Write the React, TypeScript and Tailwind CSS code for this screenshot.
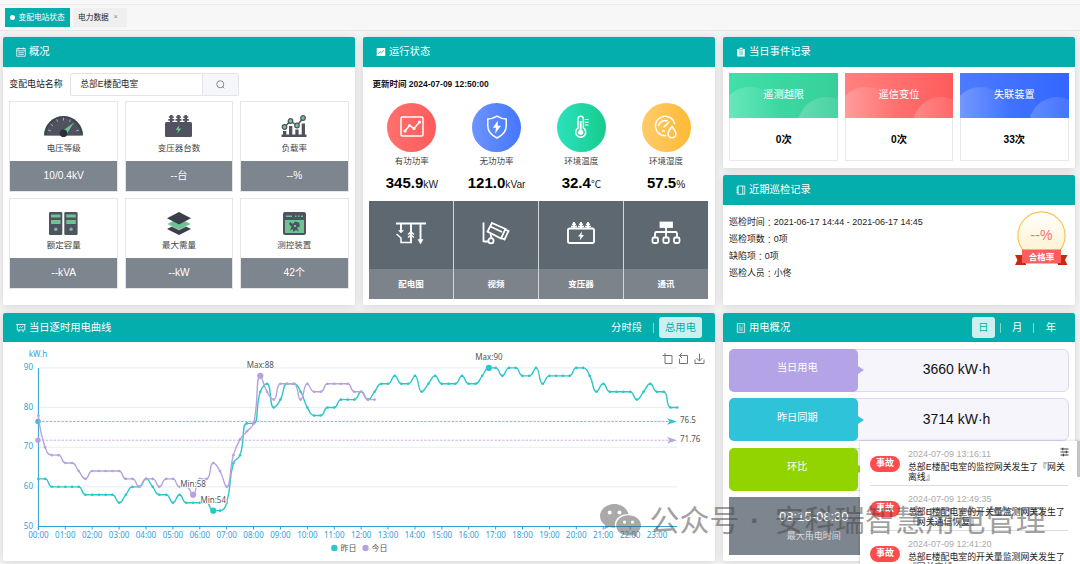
import React from 'react';
import type { ReactNode } from 'react';

const TEAL = '#2ec7c9';
const PURPLE = '#b6a2de';

const yesterday = [
  62, 62, 60, 60, 60, 60, 60, 58, 58, 58, 58, 58, 56, 58, 60, 60, 62, 60, 58, 58, 56, 58, 56, 56,
  56, 56, 54, 54, 56, 66, 68, 76, 76, 84, 86, 80, 82, 86, 86, 84, 80, 78, 78, 80, 80, 82, 82, 82,
  84, 82, 84, 86, 86, 88, 86, 86, 88, 84, 86, 88, 86, 86, 86, 88, 86, 86, 88, 90, 90, 88, 90, 90,
  88, 88, 90, 86, 88, 88, 88, 88, 90, 90, 88, 84, 86, 84, 84, 84, 84, 82, 84, 86, 84, 84, 80, 80,
];
const today = [
  78, 70, 68, 68, 66, 66, 64, 62, 64, 64, 64, 64, 64, 62, 62, 60, 62, 62, 60, 62, 62, 60, 60, 58,
  62, 62, 66, 64, 60, 68, 72, 74, 76, 88, 84, 82, 86, 86, 86, 82, 86, 84, 84, 86, 86, 86, 86, 84,
  84, 82, 82,
];

const px = (i: number) => 35.4 + i * 6.724;
const py = (v: number) => 183.5 - (v - 50) * 3.965;
const clamp = (v: number, a: number, b: number) => Math.min(Math.max(v, Math.min(a, b)), Math.max(a, b));

function smoothPath(data: number[]): string {
  const pts = data.map((v, i) => [px(i), py(v)]);
  let d = `M${pts[0][0]} ${pts[0][1]}`;
  let out = pts[0];
  for (let i = 1; i < pts.length; i++) {
    const p = pts[i];
    const prev = pts[i - 1];
    const next = pts[i + 1];
    let cin = p;
    let nextOut = p;
    if (next) {
      const lp = Math.hypot(p[0] - prev[0], p[1] - prev[1]);
      const ln = Math.hypot(next[0] - p[0], next[1] - p[1]);
      const k = (0.5 * ln) / (ln + lp);
      const ox = clamp(p[0] + (next[0] - prev[0]) * k, p[0], next[0]);
      const oy = clamp(p[1] + (next[1] - prev[1]) * k, p[1], next[1]);
      const ix = clamp(p[0] - ((ox - p[0]) * lp) / ln, prev[0], p[0]);
      const iy = clamp(p[1] - ((oy - p[1]) * lp) / ln, prev[1], p[1]);
      cin = [ix, iy];
      nextOut = [p[0] + ((p[0] - ix) * ln) / lp, p[1] + ((p[1] - iy) * ln) / lp];
    }
    d += `C${out[0]} ${out[1]} ${cin[0]} ${cin[1]} ${p[0]} ${p[1]}`;
    out = nextOut;
  }
  return d;
}

function Panel({ icon, title, extra, className, children }: { icon: ReactNode; title: string; extra?: ReactNode; className: string; children: ReactNode }) {
  return (
    <section className={`flex flex-col overflow-hidden rounded-[2px] bg-white shadow-[0_1px_8px_rgba(0,0,0,0.13)] ${className}`}>
      <header className="flex h-[29.5px] shrink-0 items-center bg-[#04aeac] pl-[13px] text-white">
        <span className="flex w-[13px] items-center">{icon}</span>
        <h2 className="text-[10.3px] leading-[14px] whitespace-nowrap">{title}</h2>
        {extra}
      </header>
      {children}
    </section>
  );
}

const hi = 'block h-[10px] w-[10px]';
const CalendarIcon = () => (
  <svg className={hi} viewBox="0 0 20 20" fill="none" stroke="#fff" strokeWidth="1.5">
    <path d="M1.500 3h17v15.500h-17zM1.500 7.500h17M4.500 11.300h11M4.500 14.800h11M5.500 1v4M14.500 1v4" />
  </svg>
);
const TrendBoxIcon = () => (
  <svg className={hi} viewBox="0 0 20 20"><rect x="1.5" y="2" width="17" height="16" fill="#fff" /><path d="M4.5 13.5l4-4 2.5 2 5-5.5" fill="none" stroke="#04aeac" strokeWidth="1.5" /></svg>
);
const ClipboardIcon = () => (
  <svg className={hi} viewBox="0 0 20 20"><path d="M2.5 4H7V1.5h6V4h4.500v15h-15z" fill="#fff" /><path d="M6 5.500h8M6 10h8M6 14h8" stroke="#04aeac" strokeWidth="1.6" /></svg>
);
const NotebookIcon = () => (
  <svg className={hi} viewBox="0 0 20 20" fill="none" stroke="#fff" strokeWidth="1.6"><path d="M3.500 2h14v16.500h-14zM13.500 2v16M.5 5.500H6M.5 10H6M.5 14.500H6" /></svg>
);
const BoardIcon = () => (
  <svg className={hi} viewBox="0 0 20 20" fill="none" stroke="#fff" strokeWidth="1.6"><path d="M.5 3h19M2.500 3v11h15V3M6 10l3-2.500 2 1.500 3.500-3M7 14l-2 4.500M13 14l2 4.500" /></svg>
);
const DocIcon = () => (
  <svg className={hi} viewBox="0 0 20 20" fill="none" stroke="#fff" strokeWidth="1.5"><rect x="2.500" y="1.500" width="15" height="17" /><path d="M5.500 6h4M5.500 10h9M5.500 14h9M12 6h2.500" /></svg>
);

const dark = '#50535f';
const green = '#6ec294';

const GaugeIcon = () => (
  <svg className="h-[22px] w-[39px]" viewBox="0 0 39 22">
    <path d="M0 20.500a19.500 19.500 0 0 1 39 0z" fill="#37474b" />
    <path d="M2.300 20.300a17.200 17.200 0 0 1 34.400 0z" fill={dark} />
    <path d="M4 15l3 1M6.500 9l2.500 2M12.500 4.300l1.200 2.600M19.500 2.500v3M26.500 4.300l-1.200 2.600M35 15l-3 1" stroke="#b8bcc0" strokeWidth=".8" />
    <path d="M30 7.500L19 15.500l4 3z" fill={green} />
    <circle cx="19.500" cy="18.300" r="3.800" fill="#2b2e3b" />
  </svg>
);
const TransformerIcon = () => (
  <svg className="h-[22px] w-[27px]" viewBox="0 0 27 22" fill={dark}>
    <rect y="7" width="27" height="15" rx="1.500" />
    <path d="M5 0h2.500v7H5zM12.300 0h2.500v7h-2.500zM19.500 0H22v7h-2.500z" />
    <path d="M3.800 1.200h5v1.600h-5zM3.300 4h6v1.700h-6zM11 1.200h5v1.600h-5zM10.500 4h6v1.700h-6zM18.300 1.200h5v1.600h-5zM17.800 4h6v1.700h-6z" />
    <path d="M14.500 10l-4 5h2.500l-.7 3.500 4-5h-2.500z" fill={green} />
  </svg>
);
const LoadIcon = () => (
  <svg className="h-[22px] w-[26px]" viewBox="0 0 26 22">
    <path d="M.5 19.500h25V22H.5zM2 16h3.300v5H2zM8 11h3.300v10H8zM14.300 14.500h3.300v6.500h-3.300zM20.700 8.500H24V21h-3.300z" fill={dark} />
    <path d="M3.500 12l6-6 6.500 4.500 5.800-7" stroke={dark} strokeWidth="1.500" fill="none" />
    <g fill={green} stroke={dark} strokeWidth="1.200"><circle cx="3.500" cy="12" r="2.300" /><circle cx="9.500" cy="6" r="2.300" /><circle cx="16" cy="10.500" r="2.300" /><circle cx="22" cy="3" r="2.300" /></g>
  </svg>
);
const CapacityIcon = () => (
  <svg className="h-[23px] w-[29px]" viewBox="0 0 29 23">
    {[0, 15.3].map((x) => (
      <g key={x} transform={`translate(${x} 0)`}>
        <rect width="13.300" height="23" rx="1.300" fill={dark} />
        <path d="M2 2.500h9.500v3H2zM2 8h9.500v4H2z" fill={green} /><circle cx="6.800" cy="17.300" r="1.700" fill={green} />
      </g>
    ))}
  </svg>
);
const LayersIcon = () => (
  <svg className="h-[23px] w-[24px]" viewBox="0 0 24 23">
    <path d="M0 17l12-6 12 6-12 6z" fill="#3c3e4b" /><path d="M0 12l12-6 12 6-12 6z" fill={green} stroke="#fff" strokeWidth=".4" /><path d="M0 6.300L12 0l12 6.300-12 6.200z" fill="#3c3e4b" />
  </svg>
);
const DeviceIcon = () => (
  <svg className="h-[23px] w-[23px]" viewBox="0 0 23 23">
    <rect width="23" height="23" rx="2" fill={dark} /><path d="M2 8h19v13H2zM3 3.500h6V5H3zM12 3.500h1.500V5H12zM15 3.500h1.500V5H15zM18 3.500h2V5h-2z" fill={green} />
    <path d="M7 10l3 2 2-2.500 4 1 1 4-3 1 2 4-3-1.500-3 2v-3l-3 1.500 1.500-4L6 12z" fill={dark} /><circle cx="12" cy="14" r="1.200" fill={green} />
  </svg>
);

const stats: { icon: ReactNode; name: string; value: string }[] = [
  { icon: <GaugeIcon />, name: '电压等级', value: '10/0.4kV' },
  { icon: <TransformerIcon />, name: '变压器台数', value: '--台' },
  { icon: <LoadIcon />, name: '负载率', value: '--%' },
  { icon: <CapacityIcon />, name: '额定容量', value: '--kVA' },
  { icon: <LayersIcon />, name: '最大需量', value: '--kW' },
  { icon: <DeviceIcon />, name: '测控装置', value: '42个' },
];

const runs = [
  {
    name: '有功功率', value: '345.9', unit: 'kW', bg: 'from-[#ff706e] to-[#fe5b5c]',
    icon: <svg className="h-[24px] w-[24px]" viewBox="0 0 24 24" fill="none" stroke="#fff" strokeWidth="1.500"><rect x="1" y="2" width="22" height="19" rx="1.500" /><path d="M5 16l4.500-5.500 4.500 3 5.500-6.500" /><g fill="#fff" stroke="none"><circle cx="5" cy="16" r="1.600" /><circle cx="9.500" cy="10.500" r="1.500" /><circle cx="14" cy="13.500" r="1.500" /><circle cx="19.500" cy="7" r="1.600" /></g></svg>,
  },
  {
    name: '无功功率', value: '121.0', unit: 'kVar', bg: 'from-[#6c93ff] to-[#4577fc]',
    icon: <svg className="h-[24px] w-[24px]" viewBox="0 0 24 24" fill="none" stroke="#fff" strokeWidth="1.500"><path d="M12 1.200c3 2 6 2.800 9.200 2.800v7c0 6-4 9.500-9.200 12-5.200-2.500-9.200-6-9.200-12V4C6 4 9 3.200 12 1.200z" /><path d="M13 5.500L7.800 12.800H11l-1 6 6-8h-3.400z" fill="#fff" stroke="none" /></svg>,
  },
  {
    name: '环境温度', value: '32.4', unit: '℃', bg: 'from-[#2ce1bd] to-[#15cc8d]',
    icon: <svg className="h-[24px] w-[24px]" viewBox="0 0 24 24" fill="none" stroke="#fff" strokeWidth="1.500"><path d="M9 13V4a2.700 2.700 0 0 1 5.400 0v9a5 5 0 1 1-5.400 0z" /><path d="M11.700 6v10" strokeWidth="2" /><circle cx="11.700" cy="17.300" r="2.600" fill="#fff" stroke="none" /><path d="M16 4.500h3.500M16 7.300h3.500M16 10h3.500" strokeWidth="1.200" /></svg>,
  },
  {
    name: '环境湿度', value: '57.5', unit: '%', bg: 'from-[#ffcb68] to-[#ffba31]',
    icon: <svg className="h-[24px] w-[24px]" viewBox="0 0 24 24" fill="none" stroke="#fff" strokeWidth="1.500"><path d="M12 20.800A9.800 9.800 0 1 1 20.800 9M4.500 11a6.500 6.500 0 0 1 9-5M9.500 12.500L15 7M8 16h3" /><path d="M18 11.500c2.500 3.300 4 5 4 7.300a4 4 0 0 1-8 0c0-2.300 1.500-4 4-7.300z" /></svg>,
  },
];

const s4 = 'h-[26px] w-[32px]';
const links = [
  { name: '配电图', icon: <svg className={s4} viewBox="0 0 32 26" fill="none" stroke="#fff" strokeWidth="1.900"><path d="M1 3.500h30M6 3.500v8M16 3.500V22.500M25.500 3.500V20" /><path d="M3.500 10.500h5L6 13zM23 19.500h5L25.500 24z" fill="#fff" strokeWidth=".5" /><path d="M1.500 14l4.500 4v4.500h11M13 14.500l3-2.500 3 2.500M13 17.500l3-2.500 3 2.500" strokeWidth="1.500" /></svg> },
  { name: '视频', icon: <svg className={s4} viewBox="0 0 32 26" fill="none" stroke="#fff" strokeWidth="1.800"><path d="M3.500 2.500v19.500M3.500 21.500h5" /><path d="M12 3l13.500 6-4.500 9.500-13.500-7zM25 9.500l3.500 1.500-4 8.500-3-1.500M10.500 6.500L22 12" /><circle cx="11" cy="20.800" r="2.600" /><path d="M10.500 14l1 4" /></svg> },
  { name: '变压器', icon: <svg className={s4} viewBox="0 0 32 26" fill="none" stroke="#fff"><rect x="3" y="8.500" width="26" height="14.500" rx="1.800" strokeWidth="1.900" /><path d="M9 2v6M16 2v6M23 2v6" strokeWidth="2" /><path d="M6 6.500h6M7 4.300h4M13 6.500h6M14 4.300h4M20 6.500h6M21 4.300h4" strokeWidth="1.600" /><path d="M17 11.500l-4 5h2.500l-.8 4 4.300-5.500h-2.500z" fill="#fff" stroke="none" /></svg> },
  { name: '通讯', icon: <svg className={s4} viewBox="0 0 32 26" fill="none" stroke="#fff" strokeWidth="1.800"><rect x="10.500" y="2.500" width="11.500" height="4.500" fill="#fff" /><path d="M16 7v11M5 17.500v-4q0-1.500 1.500-1.500h19q1.500 0 1.500 1.500v4" /><rect x="2.500" y="17.500" width="5.500" height="5.500" rx="1.500" /><rect x="13.300" y="17.500" width="5.500" height="5.500" rx="1.500" /><rect x="24" y="17.500" width="5.500" height="5.500" rx="1.500" /></svg> },
];

const events = [
  { name: '遥测越限', count: '0次', bg: 'from-[#40e0a9] to-[#38ce99]' },
  { name: '遥信变位', count: '0次', bg: 'from-[#ff8180] to-[#ff5b5b]' },
  { name: '失联装置', count: '33次', bg: 'from-[#4d7bff] to-[#3266ff]' },
];

const patrol = [
  ['巡检时间', '2021-06-17 14:44 - 2021-06-17 14:45'],
  ['巡检项数', '0项'],
  ['缺陷项', '0项'],
  ['巡检人员', '小佟'],
];

const usage = [
  { name: '当日用电', value: '3660 kW·h', bg: 'bg-[#b5a3e8]', arrow: 'border-l-[#b5a3e8]' },
  { name: '昨日同期', value: '3714 kW·h', bg: 'bg-[#2fc3da]', arrow: 'border-l-[#2fc3da]' },
  { name: '环比', value: '', bg: 'bg-[#92d400]', arrow: 'border-l-[#92d400]' },
];

const alarms = [
  { time: '2024-07-09 13:16:11', text: '总部E楼配电室的监控网关发生了『网关离线』' },
  { time: '2024-07-09 12:49:35', text: '总部E楼配电室的开关量监测网关发生了『网关通信恢复』' },
  { time: '2024-07-09 12:41:20', text: '总部E楼配电室的开关量监测网关发生了『网关离线』' },
];

function Chart() {
  const hours = Array.from({ length: 24 }, (_, h) => `${String(h).padStart(2, '0')}:00`);
  return (
    <svg className="mt-[0.400px] block h-[217px] w-[712px] font-['Noto_Sans','Noto_Sans_CJK_SC',sans-serif] text-[8px]" viewBox="0 0 712 217">
      {[60, 70, 80, 90].map((v) => <path key={v} d={`M35 ${py(v)}H674`} stroke="#e1eef9" strokeWidth="1" />)}
      <path d="M35.400 25V187M35 183.500H674" stroke="#2f9fd8" strokeWidth="1" fill="none" />
      {hours.map((h, i) => (
        <g key={h}>
          <path d={`M${px(i * 4)} 183.500v3`} stroke="#2f9fd8" />
          <text x={px(i * 4)} y="194.500" textAnchor="middle" fill="#2f9fd8">{h}</text>
        </g>
      ))}
      {[50, 60, 70, 80, 90].map((v) => <text key={v} x="30" y={py(v) + 2.200} textAnchor="end" fill="#2f9fd8">{v}</text>)}
      <text x="35" y="13.500" textAnchor="middle" fill="#2f9fd8">kW.h</text>
      {[[76.5, TEAL], [71.76, PURPLE]].map(([v, c]) => {
        const y = py(v as number);
        return (
          <g key={v}>
            <path d={`M35 ${y}H666`} stroke={c as string} strokeWidth=".8" strokeDasharray="2.600 1.300" />
            <circle cx="35" cy={y} r="2.700" fill={c as string} />
            <path d={`M674 ${y}l-10-3.300 2.500 3.300-2.500 3.300z`} fill={c as string} />
            <text x="677" y={y + 2} fill="#555">{v}</text>
          </g>
        );
      })}
      {[{ d: yesterday, c: TEAL }, { d: today, c: PURPLE }].map((s) => (
        <g key={s.c}>
          <path d={smoothPath(s.d)} fill="none" stroke={s.c} strokeWidth="1.400" />
          {s.d.map((v, i) => <circle key={i} cx={px(i)} cy={py(v)} r="1.300" fill={s.c} />)}
        </g>
      ))}
      {[
        { i: 67, v: 90, t: 'Max:90', c: TEAL }, { i: 26, v: 54, t: 'Min:54', c: TEAL },
        { i: 33, v: 88, t: 'Max:88', c: PURPLE }, { i: 23, v: 58, t: 'Min:58', c: PURPLE },
      ].map((m) => (
        <g key={m.t}>
          <circle cx={px(m.i)} cy={py(m.v)} r="3.100" fill={m.c} />
          <text x={px(m.i)} y={py(m.v) - 8} textAnchor="middle" fill="#555" stroke="#fff" strokeWidth="1.500" paintOrder="stroke">{m.t}</text>
        </g>
      ))}
      <g stroke="#666" strokeWidth=".9" fill="none">
        <path d="M659.500 12.500h9.500v8h-7v-10.500" />
        <path d="M676.500 15.500v5h8v-8h-8M679 10l-2.500 2.500 2.500 2.500" />
        <path d="M692 16.500v4h9v-4M696.500 10.500v7.500M693.500 15l3 3 3-3" />
      </g>
      <circle cx="331.300" cy="205" r="3.200" fill={TEAL} /><text x="337.500" y="207.500" fill="#555">昨日</text>
      <circle cx="362.500" cy="205" r="3.200" fill={PURPLE} /><text x="368.500" y="207.500" fill="#555">今日</text>
    </svg>
  );
}

export default function App() {
  return (
    <div className="relative flex h-[564px] w-[1080px] flex-col overflow-hidden bg-[#f4f4f4] font-['Liberation_Sans','Noto_Sans_CJK_SC',sans-serif] text-[#222]">
      <div className="h-[5px] shrink-0 border-b border-[#ececec] bg-[#f8f8f8]" />
      <nav className="flex h-[25.500px] shrink-0 items-center gap-[3px] border-b border-[#e6e6e6] bg-[#f7f7f7] pt-[0.500px] pl-[5px] text-[7.700px]">
        <div className="flex h-[19.500px] w-[65px] items-center gap-[3.500px] bg-[#04aeac] pl-[5px] whitespace-nowrap text-white">
          <i className="h-[5px] w-[5px] shrink-0 rounded-full bg-white" />变配电站状态
        </div>
        <div className="flex h-[19.500px] w-[53.500px] items-center gap-[5px] bg-[#efefef] pl-[5px] whitespace-nowrap">电力数据<span className="text-[7px] text-[#888]">×</span></div>
      </nav>

      <main className="flex flex-col gap-[7.500px] pt-[6.800px] pl-[3px]">
        <div className="flex h-[268px] gap-[8px]">
          <Panel icon={<CalendarIcon />} title="概况" className="w-[352px]">
            <div className="flex flex-col px-[6.300px] pt-[6.500px]">
              <div className="flex h-[22.500px] items-center text-[8.900px] whitespace-nowrap">
                <span className="w-[61px]">变配电站名称</span>
                <div className="flex h-[22.500px] w-[168.500px] rounded-[2px] border border-[#e2e4ea]">
                  <div className="flex w-[131px] items-center pl-[9px] text-[8.700px]">总部E楼配电室</div>
                  <div className="flex flex-1 items-center justify-center border-l border-[#e2e4ea] bg-[#f5f7fa]">
                    <svg className="h-[9px] w-[9px]" viewBox="0 0 18 18" fill="none" stroke="#666" strokeWidth="1.500"><circle cx="8.500" cy="8.500" r="7" /><path d="M13.500 13.500l3 3" /></svg>
                  </div>
                </div>
              </div>
              <div className="mt-[5.600px] grid grid-cols-3 gap-[6.500px]">
                {stats.map((s) => (
                  <div key={s.name} className="flex h-[90.500px] flex-col border border-[#e4e6e9]">
                    <div className="flex flex-1 flex-col items-center">
                      <div className="mt-[12px] flex h-[24px] items-center">{s.icon}</div>
                      <div className="mt-[4px] text-[8.500px] leading-[12px] text-[#444]">{s.name}</div>
                    </div>
                    <div className="flex h-[30px] items-center justify-center bg-[#7d858e] text-[10.200px] text-white">{s.value}</div>
                  </div>
                ))}
              </div>
            </div>
          </Panel>

          <Panel icon={<TrendBoxIcon />} title="运行状态" className="w-[352px]">
            <div className="flex flex-col pr-[7px] pl-[6px]">
              <div className="mt-[11px] pl-[3.500px] text-[8.500px] leading-[12px] font-bold text-[#111]">更新时间 2024-07-09 12:50:00</div>
              <div className="mt-[13px] grid grid-cols-4">
                {runs.map((r) => (
                  <div key={r.name} className="flex flex-col items-center pl-[1px] whitespace-nowrap">
                    <div className={`flex h-[49px] w-[49px] items-center justify-center rounded-full bg-linear-to-r ${r.bg}`}>{r.icon}</div>
                    <div className="mt-[3px] text-[8.500px] leading-[12px] text-[#444]">{r.name}</div>
                    <div className="mt-[6px] text-[10.200px] leading-[20px] text-[#222]"><b className="text-[15px] text-black">{r.value}</b>{r.unit}</div>
                  </div>
                ))}
              </div>
              <div className="mt-[6px] grid h-[98.500px] grid-cols-4 gap-px bg-[#d4d7d9]">
                {links.map((l) => (
                  <div key={l.name} className="flex flex-col bg-[#5d6870]">
                    <div className="flex flex-1 items-center justify-center pb-[4px]">{l.icon}</div>
                    <div className="flex h-[30px] items-center justify-center bg-[#7d838b] text-[8.500px] font-bold text-white">{l.name}</div>
                  </div>
                ))}
              </div>
            </div>
          </Panel>

          <div className="flex w-[352px] flex-col gap-[7.500px]">
            <Panel icon={<ClipboardIcon />} title="当日事件记录" className="h-[130.500px]">
              <div className="grid grid-cols-3 gap-[6.500px] px-[6.300px] pt-[6.500px]">
                {events.map((e) => (
                  <div key={e.name} className="flex h-[88px] flex-col border border-t-0 border-[#e9e9e9]">
                    <div className={`-mx-px flex h-[44.500px] items-center justify-center overflow-hidden bg-linear-to-r ${e.bg} relative text-[10.200px] text-white`}>
                      <i className="absolute top-[14px] -left-[9px] h-[60px] w-[60px] rounded-full bg-linear-to-r from-white/25 to-transparent" />
                      <i className="absolute top-[24px] right-[-16px] h-[56px] w-[56px] rounded-full bg-linear-to-r from-white/20 to-white/5" />
                      <span className="relative pb-[2px]">{e.name}</span>
                    </div>
                    <div className="flex flex-1 items-center justify-center pt-[1px] text-[10.200px] font-bold text-black">{e.count}</div>
                  </div>
                ))}
              </div>
            </Panel>
            <Panel icon={<NotebookIcon />} title="近期巡检记录" className="h-[130px]">
              <div className="flex justify-between px-[6px]">
                <div className="pt-[9px] text-[8.950px] leading-[17px] whitespace-nowrap">
                  {patrol.map(([k, v]) => (
                    <p key={k} className="flex h-[17.150px] items-center"><span>{k}</span><span className="font-['Noto_Sans_CJK_TC',sans-serif]" lang="zh-TW">：</span><span>{v}</span></p>
                  ))}
                </div>
                <svg className="mt-[6px] h-[56px] w-[54px]" viewBox="0 0 54 56">
                  <defs><linearGradient id="medal" x1="0" y1="0" x2="0" y2="1"><stop offset="0" stopColor="#fff" /><stop offset="1" stopColor="#fff0c8" /></linearGradient></defs>
                  <circle cx="26.500" cy="24.500" r="23.600" fill="url(#medal)" stroke="#f8c64e" strokeWidth="1.200" />
                  <path d="M0 44h10v10H0l2.500-5zM52.500 44H43v10h9.500l-2.500-5z" fill="#c8290f" />
                  <path d="M7 38.500h39V52.500H7z" fill="#fe5d5d" />
                  <path d="M7 52.500h4V54zM46 52.500h-4l3 1.500z" fill="#8f1010" />
                  <text x="26.500" y="29" textAnchor="middle" fill="#f57272" className="text-[14px]">--%</text>
                  <text x="26.500" y="49" textAnchor="middle" fill="#fff" className="text-[8.500px] font-bold">合格率</text>
                </svg>
              </div>
            </Panel>
          </div>
        </div>

        <div className="flex h-[248px] gap-[8px]">
          <Panel
            icon={<BoardIcon />} title="当日逐时用电曲线" className="w-[712px]"
            extra={
              <div className="ml-auto flex items-center pr-[13px] text-[10.300px] whitespace-nowrap">
                <span>分时段</span><i className="mr-[5px] ml-[11px] h-[10px] w-px bg-white/50" />
                <span className="flex h-[21px] w-[43px] items-center justify-center rounded-[3px] bg-[#cdefee] text-[#04aeac]">总用电</span>
              </div>
            }
          >
            <Chart />
          </Panel>

          <Panel
            icon={<DocIcon />} title="用电概况" className="w-[352px]"
            extra={
              <div className="ml-auto flex items-center pr-[19px] text-[10.300px]">
                <span className="flex h-[21px] w-[23px] items-center justify-center rounded-[3px] bg-[#cdefee] text-[#04aeac]">日</span>
                <i className="mr-[11px] ml-[5px] h-[10px] w-px bg-white/50" /><span>月</span>
                <i className="mr-[11.500px] ml-[11px] h-[10px] w-px bg-white/50" /><span>年</span>
              </div>
            }
          >
            <div className="flex flex-col gap-[6.500px] px-[6.300px] pt-[6.500px]">
              {usage.map((u) => (
                <div key={u.name} className="flex h-[43px] rounded-[6px] border border-[#dcd8f3] bg-[#f6f5fc]">
                  <div className={`-m-px flex h-[43px] w-[129px] shrink-0 items-center justify-center rounded-[5px] pr-[1px] pb-[5px] pl-[8px] text-[10.200px] text-white ${u.bg}`}>{u.name}</div>
                  <div className={`ml-px h-0 w-0 shrink-0 self-center border-y-[4.500px] border-l-[6.500px] border-y-transparent ${u.arrow}`} />
                  <div className="flex flex-1 items-center justify-center pr-[19px] pb-[1px] text-[14px] text-[#111]">{u.value}</div>
                </div>
              ))}
              <div className="flex h-[58px] w-[169px] flex-col items-center bg-[#7d858e] pt-[11px] text-white">
                <div className="text-[13px] leading-[17px]">08:15-08:30</div>
                <div className="mt-[4px] text-[9px] leading-[14px] text-white/70">最大用电时间</div>
              </div>
            </div>
          </Panel>
        </div>
      </main>

      <aside className="absolute top-[441px] left-[860px] h-[123px] w-[220px] overflow-hidden bg-white pl-[10px] shadow-[0_0_3px_rgba(0,0,0,0.2)]">
        {alarms.map((a) => (
          <div key={a.time} className="flex h-[45.100px] w-[198px] items-start gap-[8px] border-b border-[#dcdcdc]">
            <span className="mt-[14.800px] flex h-[16.500px] w-[30px] shrink-0 items-center justify-center rounded-full bg-[#fe4b4b] text-[9px] font-bold text-white">事故</span>
            <div className="pt-[6.500px]">
              <div className="text-[9px] leading-[12px] text-[#aaa]">{a.time}</div>
              <div className="mt-[2px] w-[160px] text-[8.900px] leading-[10px] break-all text-[#222]">{a.text}</div>
            </div>
          </div>
        ))}
        <svg className="absolute top-[6px] left-[200px] h-[10px] w-[9px]" viewBox="0 0 9 10" stroke="#222" strokeWidth=".9"><path d="M.5 2h8M.5 5h8M.5 8h8M2.800 .7v2.600M6.300 3.700v2.600M3.300 6.700v2.600" /></svg>
        <i className="absolute top-0 right-0 h-[36px] w-[3px] bg-[#c4c4c4]" />
      </aside>

      <div className="pointer-events-none absolute top-[500px] left-[600px] flex h-[41px] items-center text-[30px] font-normal whitespace-nowrap text-[#444] opacity-50">
        <svg className="mr-[8.500px] h-[33px] w-[41px]" viewBox="0 0 41 33" fill="#555">
          <path fillRule="evenodd" d="M14.500 0C6.500 0 0 5.300 0 12c0 3.800 2 7 5.300 9.200L4 25.500l5-2.500c2 .6 4 .9 6.300.8C13 16 19.500 10 28.500 10 27 4.300 21.300 0 14.500 0zM9.700 6.500a2 2 0 1 1 0 4 2 2 0 0 1 0-4zm9.800 0a2 2 0 1 1 0 4 2 2 0 0 1 0-4z" />
          <path fillRule="evenodd" d="M28.500 11.300c-7 0-12.300 4.500-12.300 10.200S21.500 31.500 28.500 31.500c1.500 0 2.900-.2 4.200-.6L36.700 33l-1-3.500c3-1.900 5.300-4.700 5.300-8 0-5.700-5.500-10.200-12.500-10.200zM24.500 16.500a1.600 1.600 0 1 1 0 3.200 1.600 1.600 0 0 1 0-3.200zm8 0a1.600 1.600 0 1 1 0 3.200 1.600 1.600 0 0 1 0-3.200z" />
        </svg>
        <span>公众号</span><span className="flex w-[35px] justify-center pr-[4px] font-bold">·</span><span className="tracking-[0.150px]">安科瑞智慧用电管理</span>
      </div>
    </div>
  );
}
